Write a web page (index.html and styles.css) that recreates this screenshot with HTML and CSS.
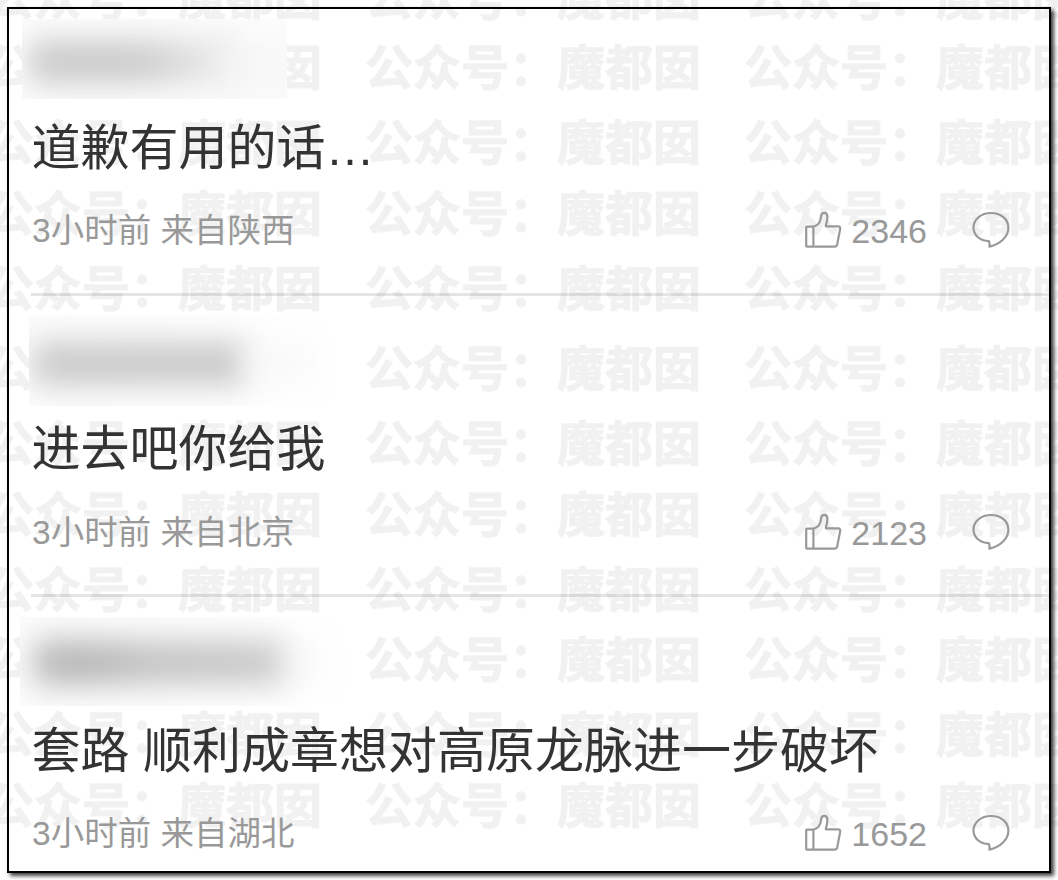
FILE: index.html
```html
<!DOCTYPE html>
<html lang="zh-CN">
<head>
<meta charset="utf-8">
<title>评论</title>
<link rel="stylesheet" href="styles.css">
</head>
<body>
<svg class="symbols" aria-hidden="true">
  <symbol id="like" viewBox="0 0 38 38">
    <path d="M8.4 15.6H1.8Q1.2 15.6 1.2 16.4V34.8Q1.2 35.6 2 35.6H29.5Q31.7 35.6 32.2 33.4L35.2 17.8Q35.6 15.3 33 15.3H21.2Q20.6 15.3 20.9 14.4C21.8 11.4 22.4 8.5 22.4 5.4Q22.2 1.8 19.3 1.8Q16.6 1.8 16.2 5C15.8 10.2 13.5 14.6 8.4 15.6V35.6"/>
  </symbol>
  <symbol id="reply" viewBox="0 0 38 38">
    <path d="M16.9 30.2C7.5 29.8 1.5 24 1.5 16.6C1.5 8.4 9 2 19 2C29 2 36.4 8.3 36.4 16.8C36.4 25.5 28.5 33.2 17.4 35.6C17.8 33.7 17.6 32 16.9 30.2Z"/>
  </symbol>
</svg>
<main class="card">
  <div class="watermark" id="watermark" aria-hidden="true"></div>
  <article class="comment first">
    <div class="name"><i class="smear dark"></i><i class="smear light"></i></div>
    <p class="text">道歉有用的话…</p>
    <footer class="meta"><span>3小时前 来自陕西</span><span class="likes"><svg class="icon"><use href="#like"/></svg>2346</span><svg class="icon"><use href="#reply"/></svg></footer>
  </article>
  <article class="comment second">
    <div class="name"><i class="smear dark"></i><i class="smear light"></i></div>
    <p class="text">进去吧你给我</p>
    <footer class="meta"><span>3小时前 来自北京</span><span class="likes"><svg class="icon"><use href="#like"/></svg>2123</span><svg class="icon"><use href="#reply"/></svg></footer>
  </article>
  <article class="comment third">
    <div class="name"><i class="smear dark"></i><i class="smear light"></i></div>
    <p class="text">套路 顺利成章想对高原龙脉进一步破坏</p>
    <footer class="meta"><span>3小时前 来自湖北</span><span class="likes"><svg class="icon"><use href="#like"/></svg>1652</span><svg class="icon"><use href="#reply"/></svg></footer>
  </article>
</main>
<script src="watermark.js"></script>
</body>
</html>
```
FILE: watermark.js
```js
const layer = document.getElementById('watermark');
for (let i = 0; i < 12; i++) {
  const row = document.createElement('div');
  row.className = 'watermark-row';
  for (let j = 0; j < 3; j++) {
    const mark = document.createElement('span');
    mark.textContent = '公众号：魔都囡';
    row.append(mark);
  }
  layer.append(row);
}
```
FILE: styles.css
```css
* { box-sizing: border-box; }
body {
  margin: 0;
  height: 880px;
  padding: 7px;
  overflow: hidden;
  background: #fff;
  font-family: "Liberation Sans", "Noto Sans CJK SC", sans-serif;
}
.symbols { display: none; }
.card {
  position: relative;
  width: 1044px;
  height: 866px;
  border: 2px solid #000;
  background: #fff;
  box-shadow: 3px 3px 4px rgba(0, 0, 0, .75);
}
.watermark {
  position: absolute;
  top: -39px;
  left: -23px;
  width: 1072px;
  height: 910px;
  overflow: hidden;
  display: grid;
  grid-template-rows: 70px 75px 71px 75px 80px 75px 71px 75px 70px 75px 71px 75px;
  color: #000;
  opacity: .05;
  font: bold 48px/48px "Noto Sans CJK SC", sans-serif;
  -webkit-text-stroke: 1.2px #000;
  pointer-events: none;
}
.watermark-row { display: flex; gap: 43px; white-space: nowrap; }
.comment { position: relative; margin-left: 22px; padding-top: 19px; }
.first { height: 287px; padding-top: 10px; border-bottom: 3px solid rgba(0, 0, 0, .1); }
.second { height: 301px; border-bottom: 3px solid rgba(0, 0, 0, .1); }
.third { height: 274px; padding-top: 20px; }

.name { position: relative; overflow: hidden; }
.first .name { width: 265px; height: 80px; margin-left: -9px; background: #fcfcfc; }
.second .name { width: 306px; height: 91px; margin-left: -2px; background: linear-gradient(90deg, #fcfcfc, #fff); }
.third .name { width: 330px; height: 89px; margin-left: -11px; background: linear-gradient(90deg, #fcfcfc, #fff); }
.smear { position: absolute; border-radius: 8px; filter: blur(15px); }
.first .dark { left: 7px; top: 22px; width: 210px; height: 42px; background: linear-gradient(90deg, #c9c9c9 0 45%, #cecece 60%, #dedede 75%, #e5e5e5); }
.first .light { left: 190px; top: 20px; width: 85px; height: 60px; background: #f6f6f6; opacity: .7; }
.second .dark { left: 4px; top: 27px; width: 216px; height: 43px; background: #c9c9c9; }
.second .light { left: 215px; top: 26px; width: 70px; height: 45px; background: #f8f8f8; opacity: .8; }
.third .dark { left: 14px; top: 23px; width: 254px; height: 45px; background: linear-gradient(90deg, #b8b8b8 0 25%, #c5c5c5 45%, #c8c8c8 80%, #d0d0d0); }
.third .light { left: 265px; top: 26px; width: 40px; height: 38px; background: #f6f6f6; opacity: .6; }

.text {
  margin: 19px 0 0 .5px;
  color: #333;
  font-size: 49px;
  line-height: 60px;
  white-space: nowrap;
}
.second .text { margin-top: 13px; }
.third .text { margin-top: 15px; }
.meta {
  display: flex;
  align-items: center;
  height: 40px;
  margin: 33px 0 0 1px;
  padding-right: 39px;
  color: #999;
  font-size: 33.5px;
  line-height: 40px;
}
.second .meta { margin-top: 34px; }
.likes { display: flex; align-items: center; margin: 0 45px 0 auto; font-size: 34px; }
.icon {
  width: 38px;
  height: 38px;
  margin-bottom: 3px;
  fill: none;
  stroke: #999;
  stroke-width: 2.2;
  stroke-linejoin: round;
}
.likes .icon { margin-right: 8px; }
```
